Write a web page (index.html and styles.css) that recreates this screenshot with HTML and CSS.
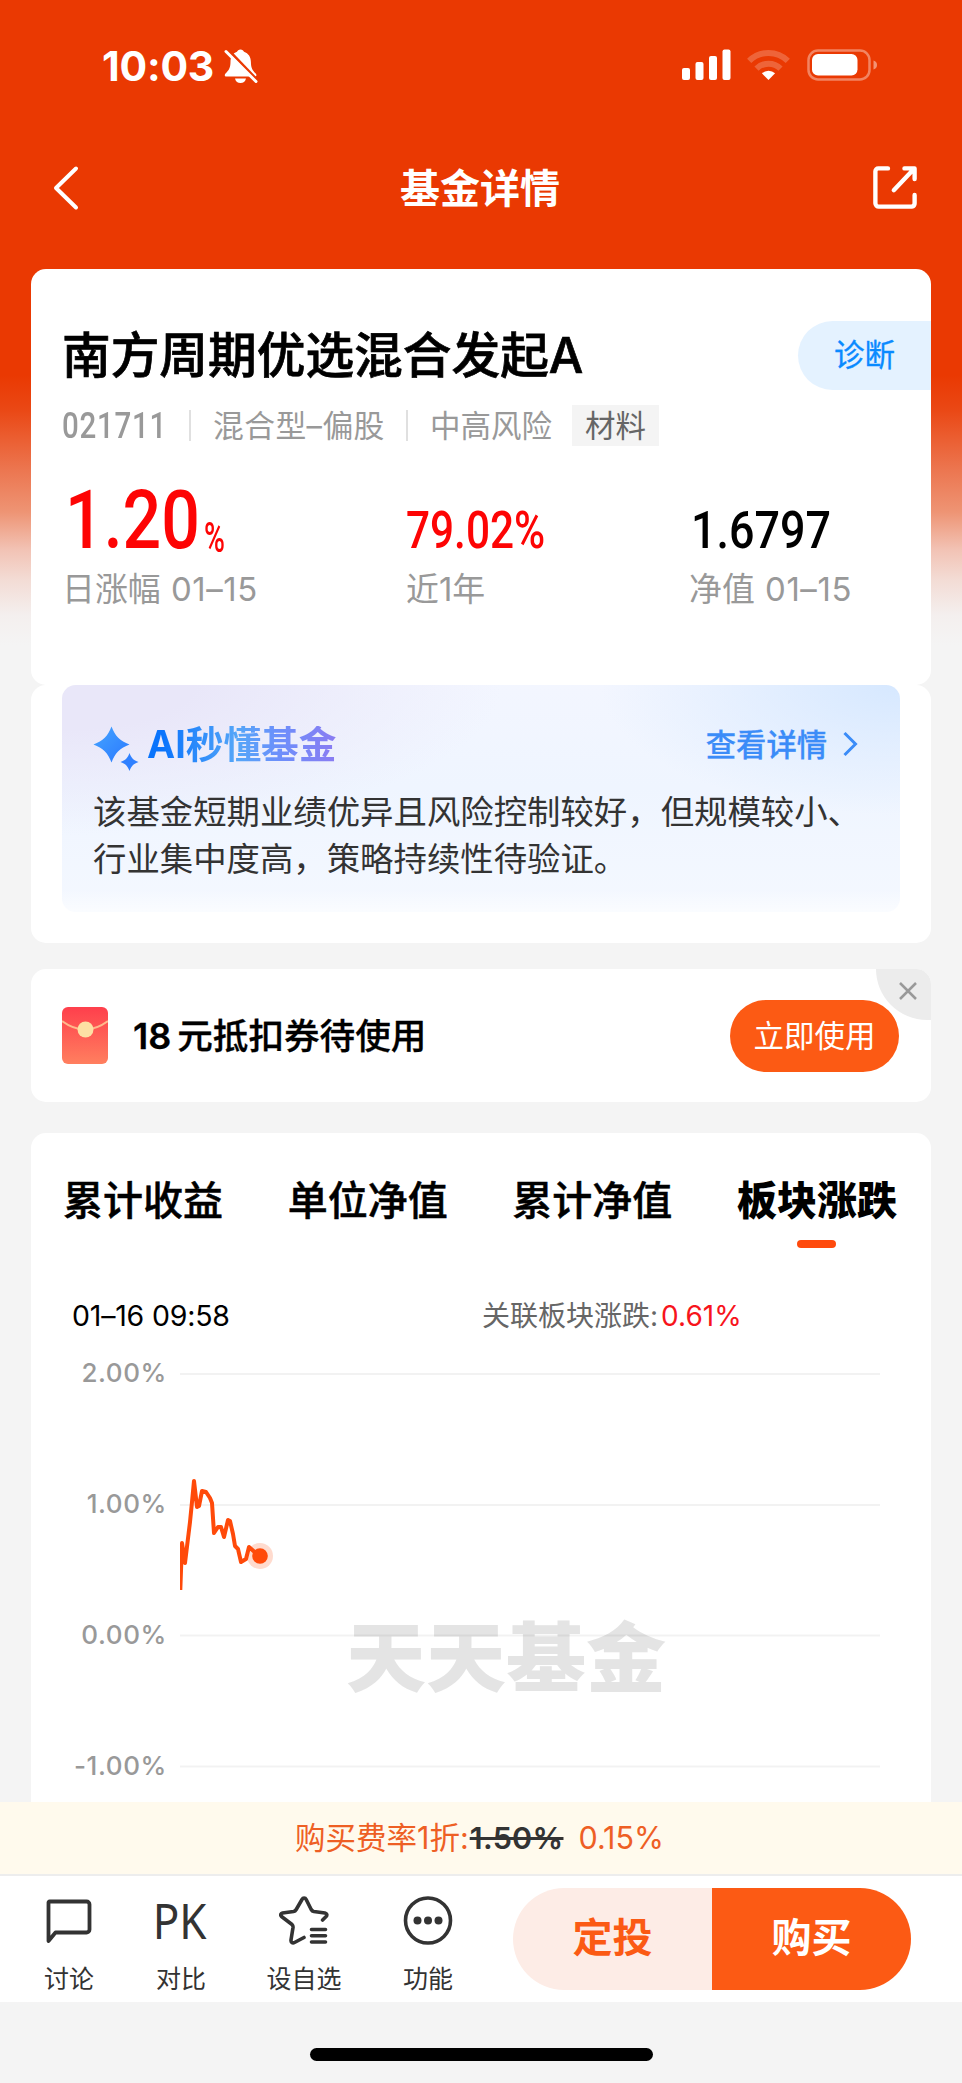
FILE: index.html
```html
<!DOCTYPE html>
<html lang="zh-CN">
<head>
<meta charset="utf-8">
<title>基金详情</title>
<link rel="stylesheet" href="styles.css">
</head>
<body>
<div class="phone">
  <header class="status">
    <div class="status-left">
      <span class="clock">10:03</span>
      <svg class="bell" width="34" height="36" viewBox="0 0 34 36">
        <path d="M16.500 1.500c-1.800 0-3 1-3.500 2.300C8.500 5.500 6.500 9 6.500 14c0 6-2 8.500-5 11.500-1.300 1.600-.8 3 .8 3h28.500c1.600 0 2.200-1.400.9-3-3-3-4.800-5.500-4.800-11.500 0-5-2.400-8.500-6.900-10.200C19.500 2.500 18.300 1.500 16.500 1.500zM11 30.500h11c-.6 3-2.800 4.500-5.500 4.500s-4.900-1.500-5.500-4.500z" fill="#fff"/>
        <path d="M3.800 1.500L34 33" stroke="#ea3902" stroke-width="3" fill="none"/>
        <path d="M2 3.500l30 30" stroke="#fff" stroke-width="3" stroke-linecap="round"/>
      </svg>
    </div>
    <div class="status-right">
      <svg width="196" height="32" viewBox="0 0 196 32">
        <g fill="#fff">
          <rect x="0" y="19" width="8" height="12" rx="2"/>
          <rect x="13.500" y="13" width="8" height="18" rx="2"/>
          <rect x="27" y="7" width="8" height="24" rx="2"/>
          <rect x="40.500" y="0.500" width="8" height="30.500" rx="2"/>
        </g>
        <g fill="none" stroke="#fff" stroke-opacity=".22" stroke-width="6">
          <path d="M67.200 11.800a27.500 27.500 0 0 1 38.600 0"/>
          <path d="M74.500 19.600a17 17 0 0 1 24 0"/>
        </g>
        <path d="M86.500 31l-6.600-6.700a9.500 9.500 0 0 1 13.200 0z" fill="#fff"/>
        <rect x="126.500" y="1.500" width="61" height="29" rx="9.500" fill="none" stroke="#fff" stroke-opacity=".38" stroke-width="2.500"/>
        <rect x="130" y="5" width="45.500" height="21.500" rx="6" fill="#fff"/>
        <path d="M191.500 11.500c2.500.8 3.500 2.500 3.500 4.500s-1 3.700-3.500 4.500z" fill="#fff" fill-opacity=".45"/>
      </svg>
    </div>
  </header>

  <nav class="navbar">
    <svg width="28" height="46" viewBox="0 0 28 46"><path d="M25 3.500L5 23l20 19.500" fill="none" stroke="#fff" stroke-width="4" stroke-linecap="round" stroke-linejoin="round"/></svg>
    <h1 class="nav-title">基金详情</h1>
    <svg width="46" height="46" viewBox="-0.500 -0.500 47.500 47.500" fill="none" stroke="#fff" stroke-width="4.500" stroke-linecap="round" stroke-linejoin="round"><path d="M16 3H6a3 3 0 0 0-3 3v33a3.500 3.500 0 0 0 3.500 3.500h34A3.500 3.500 0 0 0 43.500 39v-8.500"/><path d="M33 3h10.500v11M42.500 4L22 25.500"/></svg>
  </nav>

  <main class="content">
    <section class="card summary">
      <div class="fund-head">
        <h2 class="fund-name">南方周期优选混合发起A</h2>
        <a class="diagnose">诊断</a>
      </div>
      <div class="meta">
        <span class="code"><span class="squeeze squeeze-code">021711</span></span>
        <i class="bar"></i>
        <span class="kind">混合型–偏股</span>
        <i class="bar"></i>
        <span class="risk">中高风险</span>
        <span class="tag">材料</span>
      </div>
      <div class="stats">
        <div class="stat">
          <div class="value red"><span class="squeeze big">1.20</span><span class="squeeze pct">%</span></div>
          <div class="label">日涨幅 <span class="date">01–15</span></div>
        </div>
        <div class="stat">
          <div class="value red"><span class="squeeze mid">79.02%</span></div>
          <div class="label">近1年</div>
        </div>
        <div class="stat">
          <div class="value"><span class="squeeze nav-value">1.6797</span></div>
          <div class="label">净值 <span class="date">01–15</span></div>
        </div>
      </div>
    </section>

    <section class="card ai-card">
      <div class="ai-box">
        <div class="ai-head">
          <svg width="48" height="46" viewBox="0 0 48 46">
            <defs><linearGradient id="spark" x1="0" y1="0" x2="1" y2="1"><stop offset="0" stop-color="#45a5ff"/><stop offset="1" stop-color="#2a78ff"/></linearGradient></defs>
            <path d="M18.500 0.500C22 10 27 15 36.500 18.500 27 22 22 27 18.500 36.500 15 27 10 22 .5 18.500 10 15 15 10 18.500.5z" fill="url(#spark)"/>
            <path d="M36.500 27c1.800 5 4 7.200 9 9-5 1.800-7.200 4-9 9-1.800-5-4-7.200-9-9 5-1.800 7.200-4 9-9z" fill="#2f80ff"/>
          </svg>
          <h3 class="ai-title">AI秒懂基金</h3>
          <a class="ai-more">查看详情</a>
          <svg width="16" height="26" viewBox="0 0 16 26"><path d="M2.500 2L13.500 13 2.500 24" fill="none" stroke="#3b8cf8" stroke-width="3"/></svg>
        </div>
        <p class="ai-text">该基金短期业绩优异且风险控制较好，但规模较小、<br>行业集中度高，策略持续性待验证。</p>
      </div>
    </section>

    <section class="card coupon">
      <svg width="46" height="57" viewBox="0 0 46 57">
        <defs><linearGradient id="env" x1="0" y1="0" x2="0" y2="1"><stop offset="0" stop-color="#fe3f4c"/><stop offset="1" stop-color="#ff7f5f"/></linearGradient></defs>
        <rect width="46" height="57" rx="6" fill="url(#env)"/>
        <path d="M0 14Q23 31 46 14" fill="none" stroke="#ffb98c" stroke-width="2"/>
        <circle cx="23.500" cy="22.500" r="8" fill="#fde0a4"/>
      </svg>
      <span class="coupon-text"><b class="amount">18</b>元抵扣券待使用</span>
      <a class="use-btn">立即使用</a>
      <span class="close"><svg width="20" height="20" viewBox="0 0 20 20"><path d="M2 2l16 16M18 2L2 18" stroke="#999" stroke-width="2.500"/></svg></span>
    </section>

    <section class="card chart-card">
      <div class="tabs">
        <span class="tab">累计收益</span>
        <span class="tab">单位净值</span>
        <span class="tab">累计净值</span>
        <span class="tab active">板块涨跌</span>
      </div>
      <div class="chart-info">
        <span class="time">01–16 09:58</span>
        <span class="related">关联板块涨跌:<em class="rate">0.61%</em></span>
      </div>
      <div class="chart">
        <div class="axis"><span>2.00%</span><span>1.00%</span><span>0.00%</span><span>-1.00%</span></div>
        <div class="plot">
          <span class="watermark">天天基金</span>
          <svg class="series" width="700" height="450" viewBox="180 1353 700 450">
            <path d="M180 1374H880M180 1505H880M180 1635.500H880M180 1766.500H880" stroke="#000" stroke-opacity=".05" stroke-width="2"/>
            <path d="M180.300 1590L182 1543l3 20 5-41 2-20 2-21 3 26 2-1 3-15 4 1 4 6 2 5 2 30 4-6h3l3 10 4-17 2 1 3 13 2 12 3 3 3 13 5-3 3-12 9 8" fill="none" stroke="#ff4a0a" stroke-width="4" stroke-linejoin="round"/>
            <circle cx="260" cy="1556" r="13" fill="#ff4a0a" fill-opacity=".2"/>
            <circle cx="260" cy="1556" r="7.800" fill="#ff4a0a"/>
          </svg>
        </div>
      </div>
    </section>
  </main>

  <div class="fee"><span>购买费率1折:</span><del class="old">1.50%</del><span class="new">0.15%</span></div>

  <footer class="toolbar">
    <div class="tool tool-talk">
      <svg width="50" height="50" viewBox="0 0 50 50"><path d="M5.500 6.500h37a3 3 0 0 1 3 3v25a3 3 0 0 1-3 3H11.500L4.500 46V7.500a1 1 0 0 1 1-1z" fill="none" stroke="#333" stroke-width="3.800" stroke-linejoin="round"/></svg>
      <span>讨论</span>
    </div>
    <div class="tool tool-pk"><span class="pk">PK</span><span>对比</span></div>
    <div class="tool tool-fav">
      <svg width="50" height="50" viewBox="0 0 50 50" fill="none" stroke="#333" stroke-width="3.600" stroke-linecap="round" stroke-linejoin="round"><path d="M25 42.500l-9.500 5c-2 1-3.800-.3-3.500-2.500l2-12.500c.2-1.500 0-2-1-3L2.500 21.500c-1.500-1.500-.8-3 1-3.500l11-1.500c1.500-.3 2-.8 2.700-2L23 4.500c1-2 3.200-2 4.200 0l5 10c.7 1.200 1.200 1.700 2.700 2l11 1.500c2 .5 2.500 2 1.200 3.500l-3.500 3.500"/><path d="M32.500 34.500h14M32.500 40.800h14M32.500 47h14"/></svg>
      <span>设自选</span>
    </div>
    <div class="tool tool-more">
      <svg width="50" height="50" viewBox="0 0 50 50"><circle cx="25" cy="25.500" r="22.500" fill="none" stroke="#333" stroke-width="3.600"/><g fill="#333"><circle cx="14.500" cy="25.500" r="4"/><circle cx="25" cy="25.500" r="4"/><circle cx="35.500" cy="25.500" r="4"/></g></svg>
      <span>功能</span>
    </div>
    <div class="actions"><a class="invest">定投</a><a class="buy">购买</a></div>
  </footer>
  <div class="home"><i class="home-bar"></i></div>
</div>
</body>
</html>
```
FILE: styles.css
```css
* { box-sizing: border-box; margin: 0; padding: 0; }
body { background: #f4f4f4; }
svg { display: block; flex: none; }

.phone {
  width: 962px;
  height: 2083px;
  overflow: hidden;
  display: flex;
  flex-direction: column;
  font-family: Inter, "Noto Sans CJK SC", sans-serif;
  color: #000;
  white-space: nowrap;
  background: linear-gradient(#ea3902 0, #ea3902 375px, #ea4815 410px, #ec7650 470px, #ee9474 512px, #f2c3b5 550px, #f3dcd5 580px, #f4efee 615px, #f4f4f4 645px);
}

.status {
  height: 108px;
  padding: 48px 84px 0 102px;
  display: flex;
  justify-content: space-between;
}
.status-left { display: flex; gap: 7px; }
.clock { width: 115px; height: 36px; font-size: 41px; line-height: 36px; font-weight: 700; letter-spacing: -0.2px; color: #fff; }
.status-right { padding-top: 1px; }

.navbar {
  height: 161px;
  padding: 57px 44px 0 51px;
  display: flex;
  justify-content: space-between;
}
.nav-title { font-size: 40px; line-height: 48px; font-weight: 700; color: #fff; margin-left: 9px; }

.content { height: 1533px; padding: 0 31px; overflow: hidden; }
.card { background: #fff; border-radius: 15px; }

.summary { height: 416px; padding: 52px 0 0 31px; }
.fund-head { height: 69px; display: flex; justify-content: space-between; align-items: center; }
.fund-name { font-size: 48.700px; line-height: 67px; font-weight: 500; -webkit-text-stroke: .7px #000; }
.diagnose {
  width: 133px;
  height: 69px;
  border-radius: 35px 0 0 35px;
  background: #e4f2ff;
  color: #0a8aff;
  font-size: 30.500px;
  line-height: 68px;
  text-align: center;
  -webkit-text-stroke: .3px #0a8aff;
}
.meta { margin-top: 15px; height: 41px; display: flex; align-items: center; font-size: 30.800px; line-height: 42px; color: #999; }
.code { width: 127px; }
.squeeze { display: block; font-family: Roboto, sans-serif; font-weight: 500; transform-origin: 0 50%; }
.squeeze-code { font-size: 36px; letter-spacing: .9px; transform: scaleX(.82); }
.bar { width: 2px; height: 31px; background: #e0e0e0; }
.kind { width: 215px; padding-left: 22px; letter-spacing: .4px; }
.risk { padding-left: 22px; width: 164px; font-size: 30.500px; }
.tag { width: 87px; height: 41px; background: #f4f4f4; color: #666; text-align: center; font-size: 30.500px; line-height: 42px; }
.stats { margin-top: 35px; display: flex; }
.stat:nth-child(1) { width: 344px; }
.stat:nth-child(2) { width: 283px; }
.value { height: 80px; display: flex; align-items: flex-end; }
.red { color: #fd0404; }
.big { margin-left: 3px; width: 139px; font-size: 81px; line-height: 81px; transform: scaleX(.84); }
.pct { font-size: 43px; line-height: 48px; transform: scaleX(.66); }
.mid { font-size: 51px; line-height: 60px; transform: scaleX(.83); }
.nav-value { font-size: 51px; line-height: 60px; margin-left: 2px; transform: scaleX(.88); }
.label { margin-top: 8px; font-size: 32.900px; line-height: 41px; color: #999; }
.date { letter-spacing: .6px; margin-left: 1px; }

.ai-card { height: 258px; padding: 0 31px; }
.ai-box {
  height: 227px;
  border-radius: 14px;
  padding: 41px 30px 0 31px;
  background:
    linear-gradient(rgba(255,255,255,0) 90%, rgba(255,255,255,.6) 100%),
    radial-gradient(ellipse 300px 130px at 100% 0, #d6e8ff, rgba(214,232,255,0)),
    radial-gradient(ellipse 440px 150px at 0 0, #e9e7f9 30%, rgba(240,238,252,0)),
    linear-gradient(#f3f6ff, #eff5ff 45%, #f4f8ff);
}
.ai-head { height: 46px; display: flex; }
.ai-title {
  margin-left: 6px;
  height: 38px;
  font-size: 37.700px;
  line-height: 36px;
  font-weight: 700;
  background: linear-gradient(90deg, #0a74fc 8%, #55a6f8 48%, #6d8ffb 70%, #8a7cf2);
  -webkit-background-clip: text;
  background-clip: text;
  color: transparent;
}
.ai-more { margin-left: auto; margin-right: 15px; font-size: 30.300px; line-height: 39px; font-weight: 500; color: #3b8cf8; -webkit-text-stroke: .3px #3b8cf8; }
.ai-head svg:last-child { margin: 5px 12px 0 0; }
.ai-text { margin-top: 17px; font-size: 33.400px; line-height: 46.500px; color: #333; }

.coupon { position: relative; margin-top: 26px; height: 133px; padding: 0 32px 0 31px; display: flex; align-items: center; overflow: hidden; }
.coupon-text { margin-left: 25px; font-size: 35.600px; line-height: 50px; padding-top: 1px; font-weight: 500; -webkit-text-stroke: .3px #000; }
.amount { font-weight: 600; margin-right: 6px; font-size: 36px; }
.use-btn { margin-left: auto; width: 169px; height: 72px; border-radius: 36px; background: #fc5a14; color: #fff; font-size: 30.500px; line-height: 71px; text-align: center; }
.close { position: absolute; right: 0; top: 0; width: 55px; height: 51px; border-bottom-left-radius: 52px; background: #ececec; padding: 12px 0 0 22px; }

.chart-card { margin-top: 31px; height: 690px; }
.tabs { height: 125px; padding: 0 34px 0 32px; display: flex; justify-content: space-between; }
.tab { font-size: 40px; line-height: 136px; font-weight: 500; display: flex; flex-direction: column; align-items: center; -webkit-text-stroke: .5px #000; }
.active { font-weight: 900; -webkit-text-stroke: 0; }
.active::after { content: ""; width: 39px; height: 8px; border-radius: 4px; background: #ff4a0c; margin-top: -29px; }
.chart-info { height: 95px; padding: 38px 0 0 41px; display: flex; font-size: 28px; line-height: 40px; }
.time { width: 410px; font-size: 28.500px; letter-spacing: -.2px; }
.related { color: #666; }
.rate { font-style: normal; color: #f7141c; margin-left: 3px; }
.chart { display: flex; }
.axis { width: 136px; margin-right: 13px; text-align: right; font-size: 26px; font-weight: 500; color: #999; letter-spacing: .6px; display: flex; flex-direction: column; }
.axis span { height: 131px; line-height: 39px; }
.plot { position: relative; width: 700px; height: 450px; }
.series { position: relative; }
.watermark { position: absolute; left: 166px; top: 245px; font-size: 80px; line-height: 120px; font-weight: 900; color: #e4e4e4; transform: scaleY(.95); }

.fee { height: 74px; background: #fffaed; border-bottom: 2px solid #ededed; display: flex; justify-content: flex-start; padding-left: 295px; font-size: 30.500px; line-height: 72px; color: #ee5f24; }
.old { margin-left: 1px; color: #333; font-weight: 600; letter-spacing: .3px; }
.new { margin-left: 15px; }

.toolbar { height: 126px; background: #fff; display: flex; padding-left: 19px; }
.tool { padding-top: 19px; display: flex; flex-direction: column; align-items: center; font-size: 25px; line-height: 36px; color: #333; width: 100px; gap: 16px; }
.tool-pk { margin-left: 12px; }
.tool-fav { margin-left: 23px; }
.tool-more { margin-left: 24px; }
.pk { font-family: "Noto Sans", sans-serif; font-size: 50px; line-height: 51px; height: 50px; transform: translateX(-1px) scaleX(.88); }
.actions { margin: 12px 0 0 35px; width: 398px; height: 102px; border-radius: 51px; overflow: hidden; display: flex; font-size: 40px; line-height: 100px; font-weight: 700; text-align: center; }
.invest { flex: 1; background: #fdece6; color: #fb5a14; }
.buy { flex: 1; background: #fc5a14; color: #fff; }

.home { flex: 1; background: #f4f4f4; padding: 46px 0 0 310px; }
.home-bar { display: block; width: 343px; height: 13px; border-radius: 7px; background: #000; }
```
